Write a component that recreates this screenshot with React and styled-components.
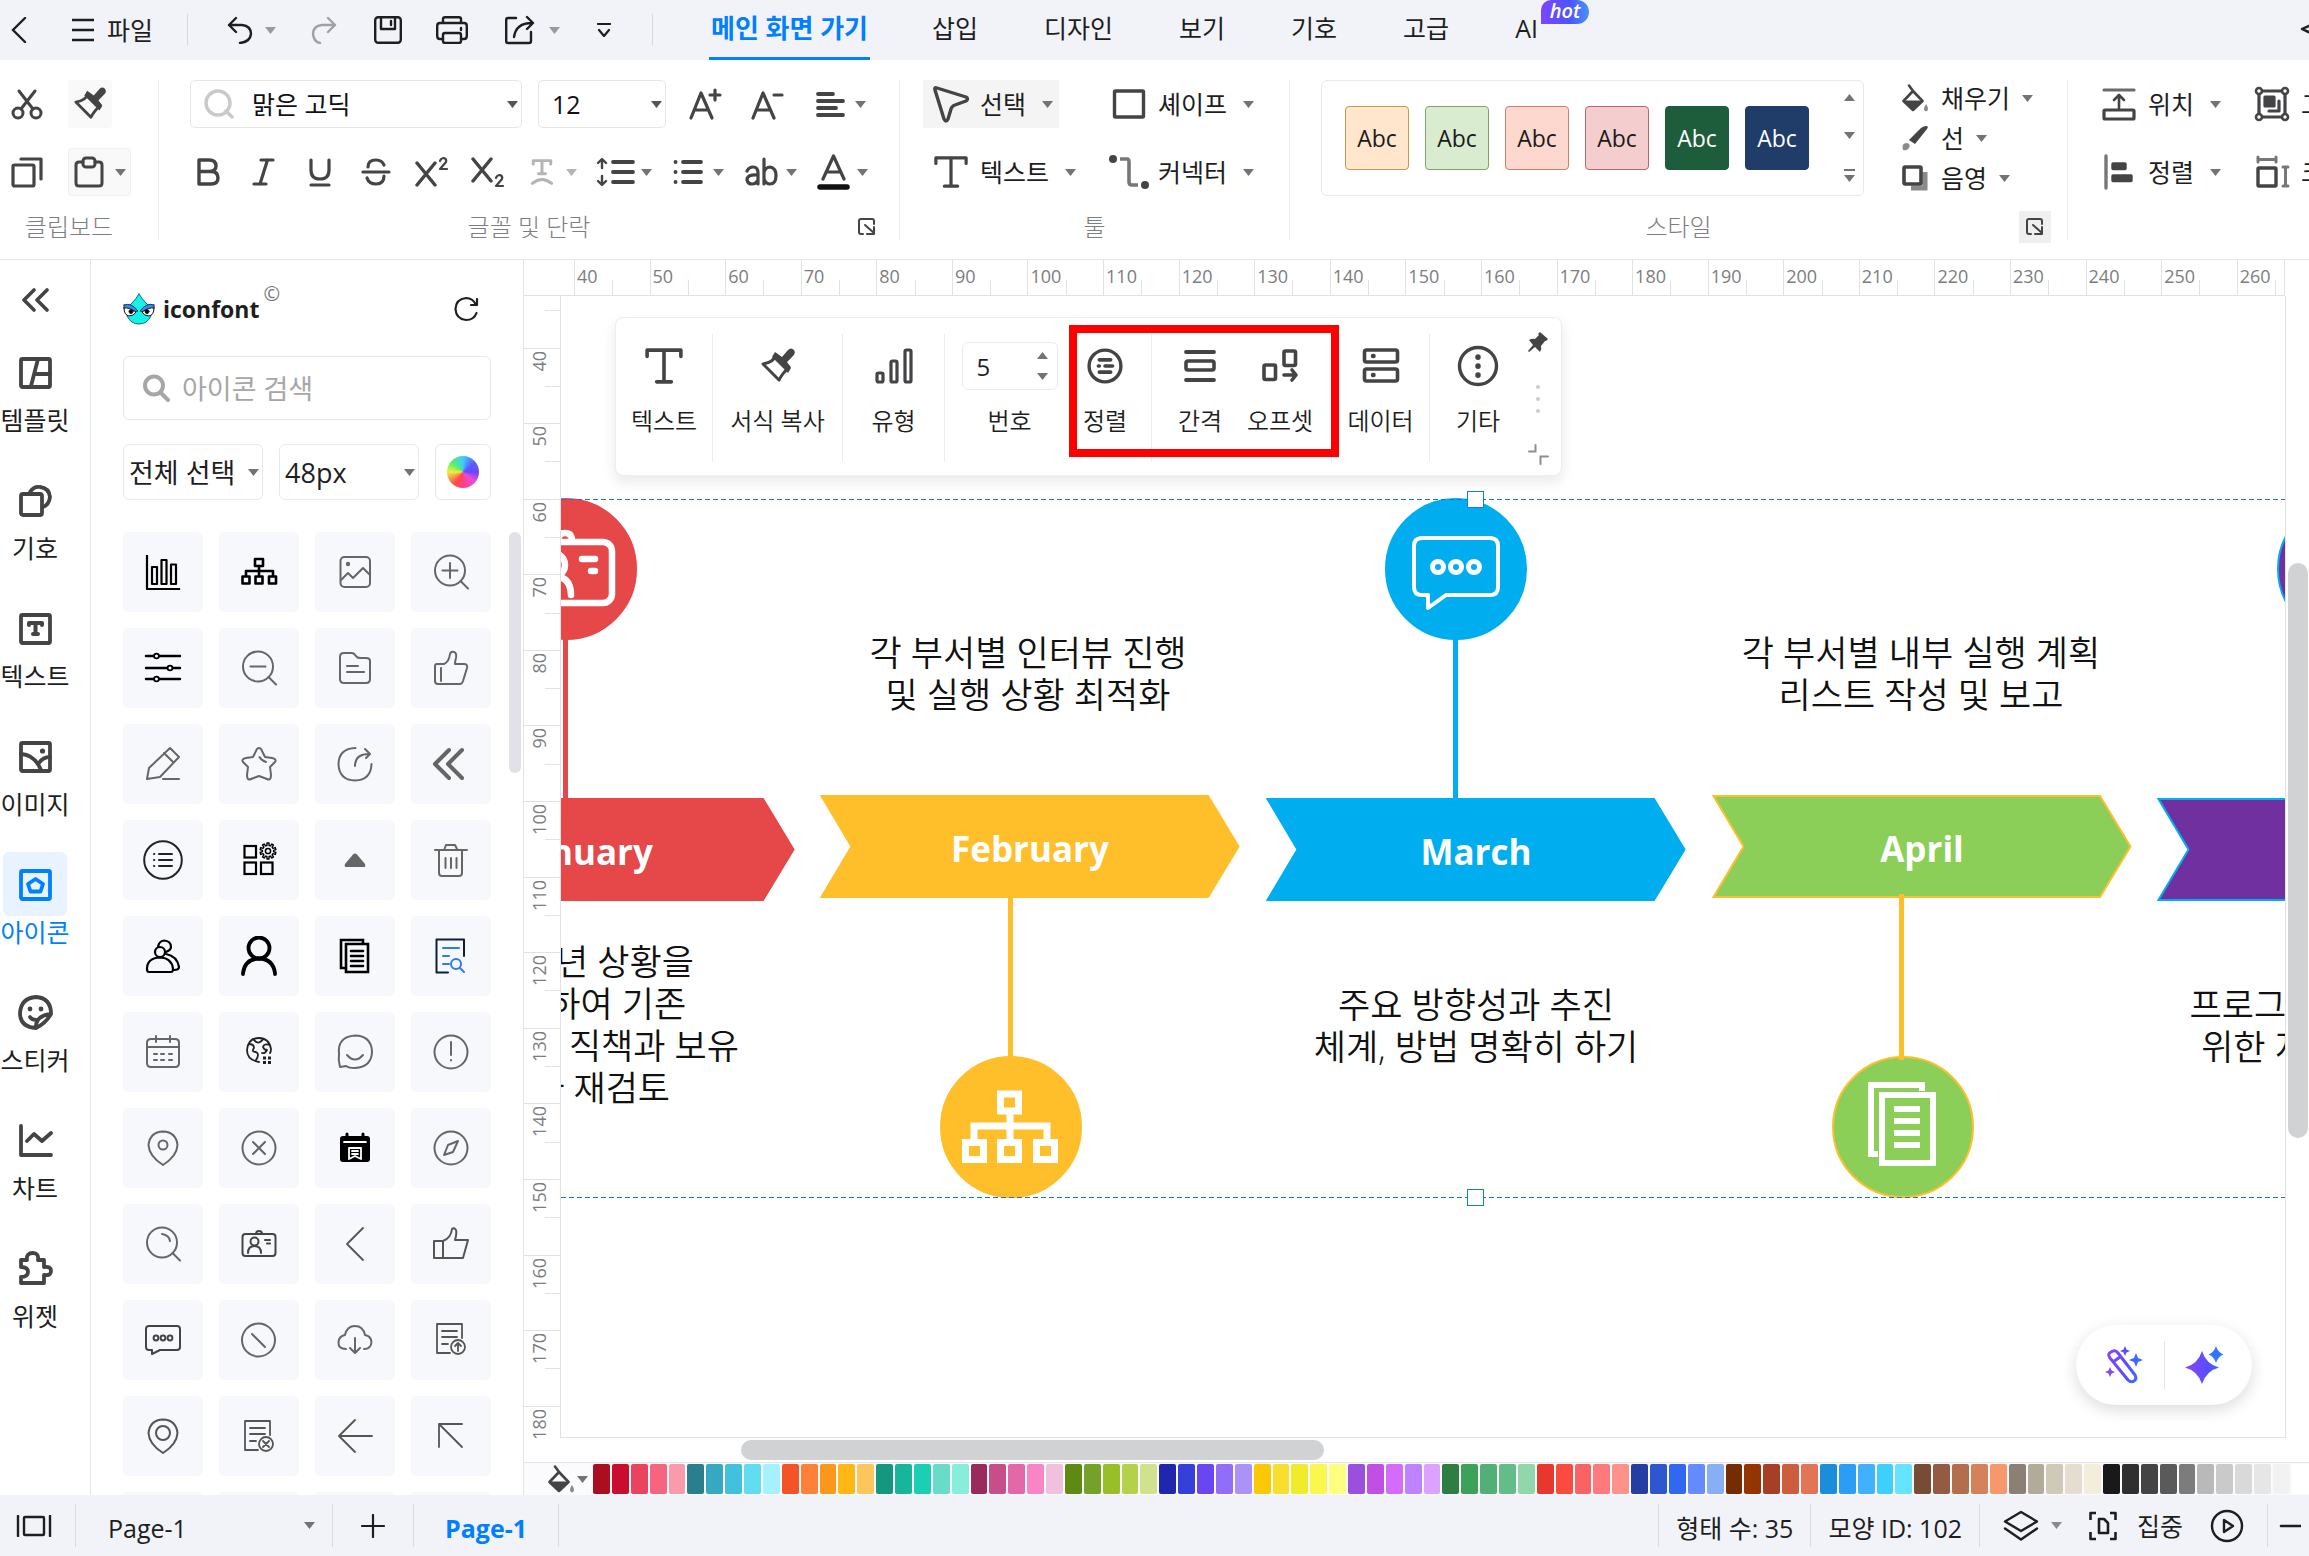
import React from "react";
import styled, { createGlobalStyle, css } from "styled-components";

const FONT = '"Open Sans", "Noto Sans CJK KR", sans-serif';
const INK = "#444446";
const BLUE = "#007fff";
/* Screen pixels between two labelled ruler marks. */
const STEP = "calc(907px / 12)";

const Global = createGlobalStyle`
  *, *::before, *::after { box-sizing: border-box; }
  html, body, #root { height: 100%; margin: 0; }
  body { font-family: ${FONT}; font-size: 25px; color: #1e1e1e; background: #fff; overflow: hidden; }
  button, input, select { font: inherit; color: inherit; margin: 0; padding: 0; border: 0; background: none; }
  button { cursor: pointer; }
  svg { display: block; flex: none; }
`;

/* ---------- drawing helpers ---------- */

const Ico = ({ w = 32, h, vb = "0 0 32 32", sw = 3, c = "currentColor", children }) => (
  <svg width={w} height={h || w} viewBox={vb} fill="none" stroke={c} strokeWidth={sw}
    strokeLinecap="round" strokeLinejoin="round" aria-hidden="true">{children}</svg>
);
const Fill = ({ c = "currentColor", ...p }) => <path fill={c} stroke="none" {...p} />;

const CaretSvg = ({ up, c = "#737373" }) => (
  <svg width="11" height="7" viewBox="0 0 11 7" aria-hidden="true">
    <path d={up ? "M0 7L5.5 0L11 7Z" : "M0 0H11L5.5 7Z"} fill={c} />
  </svg>
);

/* Outline of a toothed wheel: outer radius r, root radius q, n teeth. */
const gear = (cx, cy, r, q, n) => {
  const pts = [];
  for (let i = 0; i < n; i++) {
    [[-0.3, q], [-0.2, r], [0.2, r], [0.3, q]].forEach(([o, rad]) => {
      const a = ((i + o) / n) * Math.PI * 2;
      pts.push((cx + Math.sin(a) * rad).toFixed(2) + " " + (cy - Math.cos(a) * rad).toFixed(2));
    });
  }
  return "M" + pts.join("L") + "Z";
};

const TIcon = ({ w = 36 }) => (
  <Ico w={w} vb="0 0 36 36" sw={3.4}><path d="M2 9V3H34V9M18 3V33M11 33H25" /></Ico>
);
const BrushIcon = ({ w = 36 }) => (
  <Ico w={w} vb="0 0 36 36" sw={3}>
    <path d="M3 16Q14 14 16 7L29 19Q22 26 19 32Z" />
    <Fill d="M15 4L22 9L28 2Q31 -1 34 2Q36 5 33 8L27 14L31 20L28 25L12 9Z" />
  </Ico>
);
const BucketIcon = () => (
  <Ico w={28} vb="0 0 28 28" sw={2.6}>
    <path d="M8 1.500L12 7L2.500 17L12 26L21.500 17L12 7" />
    <Fill d="M2 16.500H22L12 27Z" />
    <Fill c="#8a8a8a" d="M25 20Q29 26 25 27.500Q21 26 25 20Z" />
  </Ico>
);
const Launch = () => (
  <Ico w={18} vb="0 0 18 18" sw={2}><path d="M5 16H3Q1 16 1 14V3Q1 1 3 1H14Q16 1 16 3V6M7 7L16 15M16 9V16H9" /></Ico>
);

/* ---------- top bar ---------- */

const Page = styled.div`display: flex; flex-direction: column; height: 100vh; overflow: hidden;`;
const TopBar = styled.header`
  position: relative; display: flex; align-items: center; height: 60px; flex: none;
  background: #f2f3f9; overflow: hidden; color: #1e1e1e;
`;
const BackButton = styled.button`display: grid; place-items: center; width: 38px; height: 56px;`;
const FileButton = styled.button`display: flex; align-items: center; gap: 12px; margin: 0 34px 0 33px; height: 56px; line-height: 36px;`;
const BarRule = styled.span`width: 1px; height: 32px; background: #d8d9de;`;
const Quick = styled.div`display: flex; align-items: center; gap: 32px; margin: 0 36px 0 36px;`;
const QuickButton = styled.button`
  display: flex; align-items: center; gap: 9px; height: 40px;
  color: ${(p) => (p.$dim ? "#a0a0a4" : "#1e1e1e")};
`;
const QuickSlot = styled.span`display: grid; place-items: center; width: ${(p) => p.$w || 32}px;`;
const Tabs = styled.nav`display: flex; gap: 58px; margin-left: 56px; height: 60px;`;
const Tab = styled.a`
  position: relative; padding: 0 4px; line-height: 56px; text-decoration: none; white-space: nowrap; color: #1e1e1e;
  ${(p) => p.$on && css`padding: 0 2px; color: ${BLUE}; font-size: 26px; font-weight: 700; border-bottom: 3px solid ${BLUE};`}
`;
const Hot = styled.span`
  position: absolute; top: 0; left: 30px; width: 48px; height: 24px; border-radius: 10px 12px 12px 0;
  background: linear-gradient(90deg, #7d45ff, #4d54ff 60%, #4794fb);
  color: #fff; font-size: 20px; font-weight: 600; font-style: italic; line-height: 22px; text-align: center;
`;
const ShareButton = styled.button`margin: 0 -15px 0 auto;`;

function Top() {
  return (
    <TopBar>
      <BackButton aria-label="뒤로"><Ico w={26} vb="0 0 26 26" sw={2.4}><path d="M19 1L7 13L19 25" strokeLinejoin="miter" /></Ico></BackButton>
      <FileButton><Ico w={24} vb="0 0 24 24" sw={2.4}><path d="M1 2H23M1 12H23M1 22H23" strokeLinecap="butt" /></Ico>파일</FileButton>
      <BarRule />
      <Quick>
        <QuickButton aria-label="실행 취소"><QuickSlot><Ico w={28} vb="0 0 28 28" sw={2.4}><path d="M10 2L3 9L10 16M3 9H16Q25 10 25 18Q24 26 14 27" /></Ico></QuickSlot><CaretSvg c="#9a9a9e" /></QuickButton>
        <QuickButton $dim aria-label="다시 실행"><QuickSlot><Ico w={28} vb="0 0 28 28" sw={2.4}><path d="M18 2L25 9L18 16M25 9H12Q3 10 3 18Q4 26 10 27" /></Ico></QuickSlot></QuickButton>
        <QuickButton aria-label="저장"><QuickSlot><Ico w={28} vb="0 0 28 28" sw={2.4}><rect x="1.2" y="1.2" width="25.6" height="25.6" rx="3" /><path d="M7 2V13H21V2M17 5V9" /></Ico></QuickSlot></QuickButton>
        <QuickButton aria-label="인쇄"><QuickSlot><Ico w={32} h={28} vb="0 0 32 28" sw={2.4}><path d="M7 7V3Q7 1.2 9 1.2H23Q25 1.2 25 3V7M7 23H4Q1.2 23 1.2 20V10Q1.2 7 4 7H28Q30.8 7 30.8 10V20Q30.8 23 28 23H25M25 12V14" /><rect x="7" y="17" width="18" height="10" rx="2" /></Ico></QuickSlot></QuickButton>
        <QuickButton aria-label="내보내기"><QuickSlot $w={40}><Ico w={30} vb="0 0 30 30" sw={2.4}><path d="M11 3H3Q1.2 3 1.2 5V26Q1.2 28 3 28H24Q26 28 26 26V17M22 2L28 8L22 14M27 8Q11 8 9 22" /></Ico></QuickSlot><CaretSvg c="#9a9a9e" /></QuickButton>
        <QuickButton aria-label="더 보기"><QuickSlot $w={24}><Ico w={14} vb="0 0 14 14" sw={2.2}><path d="M1 1H13M2 7L7 13L12 7" /></Ico></QuickSlot></QuickButton>
      </Quick>
      <BarRule />
      <Tabs>
        <Tab href="#home" $on>메인 화면 가기</Tab>
        {["삽입", "디자인", "보기", "기호", "고급"].map((t) => <Tab key={t} href={"#" + t}>{t}</Tab>)}
        <Tab href="#ai">AI<Hot>hot</Hot></Tab>
      </Tabs>
      <ShareButton aria-label="공유"><Ico w={24} vb="0 0 24 24" sw={2.4}><path d="M20 3L2 11L20 19M2 11L8 14" /></Ico></ShareButton>
    </TopBar>
  );
}

/* ---------- ribbon ---------- */

const RibbonBar = styled.section`
  display: flex; height: 200px; flex: none; padding-top: 20px; overflow: hidden;
  border-bottom: 1px solid #e6e6e6; background: #fff; color: ${INK};
`;
const Rule = styled.span`width: 1px; height: 160px; flex: none; background: #ececec;`;
const Group = styled.div`display: flex; flex-direction: column; gap: 15px; flex: none; min-width: ${(p) => p.$min || 0}px;`;
const Rows = styled.div`display: flex; flex-direction: column; gap: 20px; padding: ${(p) => p.$pad};`;
const Row = styled.div`display: flex; align-items: center; height: 48px; gap: ${(p) => p.$gap}px;`;
const LabelRow = styled.div`
  display: grid; grid-template-columns: 1fr auto 1fr; align-items: center; height: 32px; padding: 0 ${(p) => p.$pr || 16}px 0 16px;
  color: #7d7d82; font-size: 24px; font-weight: 300; line-height: 32px; white-space: nowrap;
  & > :first-child { grid-column: 2; }
`;
const LaunchButton = styled.button`
  justify-self: end; display: grid; place-items: center; width: 32px; height: 32px; color: ${INK};
  background: ${(p) => (p.$on ? "#efefef" : "transparent")};
`;
const ToolButton = styled.button`
  display: flex; align-items: center; justify-content: ${(p) => (p.$end ? "flex-end" : "center")};
  gap: ${(p) => p.$gap || 10}px; width: ${(p) => p.$w || 48}px; height: 48px; border-radius: 4px; flex: none;
  background: ${(p) => (p.$soft ? "#f9f9f9" : "transparent")};
  border: ${(p) => (p.$line ? "1px solid #f0f0f0" : "0")};
`;
const Field = styled.label`
  display: flex; align-items: center; position: relative; width: ${(p) => p.$w}px; height: 48px; padding: 0 3px 0 13px;
  border: 1px solid #e6e6e6; border-radius: 5px; color: #111;
`;
const PlainSelect = styled.select`
  appearance: none; flex: 1; min-width: 0; height: 46px; outline: 0;
  padding: ${(p) => p.$pt || 0}px 0 0 ${(p) => p.$pl || 0}px;
`;
const TextButton = styled.button`
  display: flex; align-items: center; justify-self: start; height: ${(p) => p.$h || 48}px; padding: 0 6px; color: #1e1e1e;
  line-height: 36px; white-space: nowrap; background: ${(p) => (p.$on ? "#f4f4f4" : "transparent")};
`;
const Slot = styled.span`
  display: grid; place-items: center; width: ${(p) => p.$w || 44}px; margin-right: ${(p) => p.$mr || 7}px; color: ${INK};
`;
const Text = styled.span`margin-right: ${(p) => p.$mr || 16}px;`;
const TwoCols = styled.div`
  display: grid; grid-template-columns: ${(p) => p.$first}px auto; row-gap: 20px; padding: ${(p) => p.$pad};
`;
const StyleArea = styled.div`display: flex; gap: 31px; padding: 0 28px 0 31px;`;
const Gallery = styled.div`
  display: flex; align-items: center; gap: 16px; width: 543px; height: 116px; padding: 0 8px 0 23px;
  border: 1px solid #e9e9e9; border-radius: 6px;
`;
const Sample = styled.button`
  width: 64px; height: 64px; border-radius: 4px; background: ${(p) => p.$bg}; border: 1px solid ${(p) => p.$edge};
  color: ${(p) => p.$fg || "#1a1a1a"}; font-size: 23px; line-height: 36px;
`;
const GalleryNav = styled.div`
  display: flex; flex-direction: column; align-items: center; justify-content: space-between; height: 88px; margin-left: auto; width: 12px;
`;
const Mini = styled.div`display: flex; flex-direction: column; align-items: flex-start; gap: 4px;`;
const Bare = styled.button`display: grid; place-items: center;`;

const LabelTool = ({ icon, text, on }) => (
  <TextButton $on={on}><Slot>{icon}</Slot><Text>{text}</Text><CaretSvg /></TextButton>
);
const MiniTool = ({ icon, text }) => (
  <TextButton $h={36}><Slot $w={28} $mr={12}>{icon}</Slot><Text $mr={12}>{text}</Text><CaretSvg /></TextButton>
);

const SAMPLES = [
  { $bg: "#ffe6cc", $edge: "#c39a4c" }, { $bg: "#d9ecd0", $edge: "#7ca569" }, { $bg: "#fdd8cf", $edge: "#c97f6c" },
  { $bg: "#f4cdce", $edge: "#b8686b" }, { $bg: "#1e5d3b", $edge: "#1e5d3b", $fg: "#fff" }, { $bg: "#203c68", $edge: "#203c68", $fg: "#fff" },
];

function Ribbon() {
  return (
    <RibbonBar>
      <Group>
        <Rows $pad="0 27px 0 3px">
          <Row $gap={17}>
            <ToolButton aria-label="잘라내기"><Ico w={32} sw={3}><path d="M8 3L22 21M24 3L10 21" /><circle cx="7" cy="25" r="5" /><circle cx="25" cy="25" r="5" /></Ico></ToolButton>
            <ToolButton $soft $w={44} aria-label="서식 복사"><BrushIcon w={34} /></ToolButton>
          </Row>
          <Row $gap={17}>
            <ToolButton aria-label="복사"><Ico w={32} sw={3.2}><rect x="2" y="9" width="21" height="21" rx="1.5" /><path d="M10 3H30V23" /></Ico></ToolButton>
            <ToolButton $soft $line $w={63} aria-label="붙여넣기"><Ico w={32} sw={3}><path d="M10 6H6Q3 6 3 9V27Q3 30 6 30H26Q29 30 29 27V9Q29 6 26 6H22" /><rect x="10" y="2" width="12" height="9" rx="3" /></Ico><CaretSvg /></ToolButton>
          </Row>
        </Rows>
        <LabelRow $pr={36}><span>클립보드</span></LabelRow>
      </Group>
      <Rule />
      <Group>
        <Rows $pad="0 31px">
          <Row $gap={16}>
            <Field $w={332}>
              <Ico w={30} vb="0 0 30 30" sw={3.4} c="#c9c9c9"><circle cx="14" cy="14" r="12" /><path d="M22 22L28 28" /></Ico>
              <PlainSelect aria-label="글꼴" $pl={18}><option>맑은 고딕</option></PlainSelect><CaretSvg c="#555" />
            </Field>
            <Field $w={128}><PlainSelect aria-label="글꼴 크기"><option>12</option></PlainSelect><CaretSvg c="#555" /></Field>
            <ToolButton $w={46} aria-label="글꼴 크게"><Ico w={34} vb="0 0 34 34" sw={3.2}><path d="M3 31L13 6L24 31M7 23H20M27 3V13M22 8H32" /></Ico></ToolButton>
            <ToolButton $w={46} aria-label="글꼴 작게"><Ico w={34} vb="0 0 34 34" sw={3.2}><path d="M3 31L13 6L24 31M7 23H20M24 8H32" /></Ico></ToolButton>
            <ToolButton $w={60} $end aria-label="맞춤"><Ico w={29} vb="0 0 29 29" sw={3.8}><path d="M2 4H17M2 11H27M2 18H20M2 25H27" /></Ico><CaretSvg /></ToolButton>
          </Row>
          <Row $gap={20}>
            <ToolButton $w={36} aria-label="굵게"><Ico w={32} sw={3.4}><path d="M7 4H17Q24 4 24 10Q24 15.500 17 15.500H7ZM7 15.500H19Q26 15.500 26 22Q26 28 19 28H7Z" /></Ico></ToolButton>
            <ToolButton $w={36} aria-label="기울임꼴"><Ico w={32} sw={3.2}><path d="M13 4H25M6 28H18M19.500 4L12 28" /></Ico></ToolButton>
            <ToolButton $w={36} aria-label="밑줄"><Ico w={32} sw={3.2}><path d="M7 4V14Q7 23 16 23Q25 23 25 14V4M7 29H25" /></Ico></ToolButton>
            <ToolButton $w={36} aria-label="취소선"><Ico w={32} sw={3.2}><path d="M24 9Q22 4 16 4Q8 4 8 11M3 16H29M7 22Q9 28 16 28Q24 28 24 20" /></Ico></ToolButton>
            <ToolButton $w={36} aria-label="위 첨자"><Ico w={34} vb="0 0 34 34" sw={3.4}><path d="M2 8L20 30M20 8L2 30" /><path d="M25 6Q26 3 29 3Q32 4 31 7L25 14H32" strokeWidth="2.200" /></Ico></ToolButton>
            <ToolButton $w={36} aria-label="아래 첨자"><Ico w={34} vb="0 0 34 34" sw={3.4}><path d="M2 4L20 26M20 4L2 26" /><path d="M25 23Q26 20 29 20Q32 21 31 24L25 31H32" strokeWidth="2.200" /></Ico></ToolButton>
            <ToolButton $w={51} $end aria-label="텍스트 효과"><Ico w={28} vb="0 0 28 32" sw={3.4} c="#b4b4b6"><path d="M4 7V3H24V7M14 3V18M10 18H18M3 29Q14 20 25 29" /></Ico><CaretSvg c="#b4b4b6" /></ToolButton>
            <ToolButton $w={55} $gap={6} $end aria-label="줄 간격"><Ico w={38} h={30} vb="0 0 38 30" sw={3.8}><path d="M16 5H36M16 15H36M16 25H36" /><path d="M5 3V11M5 19V27M1 6L5 2L9 6M1 24L5 28L9 24" strokeWidth="2.400" /></Ico><CaretSvg /></ToolButton>
            <ToolButton $w={52} $end aria-label="목록"><Ico w={30} vb="0 0 30 30" sw={3.8}><path d="M10 5H28M10 15H28M10 25H28M2.500 5H2.600M2.500 15H2.600M2.500 25H2.600" /></Ico><CaretSvg /></ToolButton>
            <ToolButton $w={53} $gap={7} $end aria-label="대소문자"><Ico w={35} h={30} vb="0 0 35 30" sw={3.2}><path d="M3 14Q5 10 9 10Q14 10 14 16V27M14 18Q3 17 3 23Q4 27 8 27Q12 27 14 23M20 2V27M20 15Q22 10 26 10Q32 11 32 18.500Q32 27 26 27Q22 27 20 22" /></Ico><CaretSvg /></ToolButton>
            <ToolButton $w={51} $gap={7} $end aria-label="글꼴 색"><Ico w={33} h={36} vb="0 0 33 36" sw={3.2}><path d="M6 25L16.500 2L27 25M9 18H24" /><path d="M3 33H30" stroke="#111" strokeWidth="5.500" /></Ico><CaretSvg /></ToolButton>
          </Row>
        </Rows>
        <LabelRow><span>글꼴 및 단락</span><LaunchButton aria-label="글꼴 설정"><Launch /></LaunchButton></LabelRow>
      </Group>
      <Rule />
      <Group>
        <TwoCols $first={178} $pad="0 29px 0 23px">
          <LabelTool on text="선택" icon={<Ico w={38} vb="0 0 38 38" sw={3.400}><path d="M3 5Q2 2 5 3L34 12Q37 14 34 16L23 20Q20 21 19 24L16 34Q14 38 12 34Z" /></Ico>} />
          <LabelTool text="셰이프" icon={<Ico w={34} vb="0 0 34 34" sw={3.400}><rect x="2.500" y="4" width="29" height="26" rx="1" /></Ico>} />
          <LabelTool text="텍스트" icon={<TIcon w={34} />} />
          <LabelTool text="커넥터" icon={<Ico w={42} h={36} vb="0 0 42 36" sw={3.600} c="#77777a"><path d="M12 5H19Q21 5 21 8V28Q21 31 24 31H30" strokeLinecap="butt" /><circle cx="5" cy="5" r="4" fill={INK} stroke="none" /><circle cx="37" cy="31" r="4" fill={INK} stroke="none" /></Ico>} />
        </TwoCols>
        <LabelRow><span>툴</span></LabelRow>
      </Group>
      <Rule />
      <Group>
        <StyleArea>
          <Gallery>
            {SAMPLES.map((s) => <Sample key={s.$bg} {...s}>Abc</Sample>)}
            <GalleryNav>
              <Bare aria-label="이전"><CaretSvg up /></Bare>
              <Bare aria-label="다음"><CaretSvg /></Bare>
              <Bare aria-label="모두 보기"><svg width="11" height="13" viewBox="0 0 11 13"><path d="M0 0H11V2H0ZM0 6H11L5.5 13Z" fill="#737373" /></svg></Bare>
            </GalleryNav>
          </Gallery>
          <Mini>
            <MiniTool text="채우기" icon={<BucketIcon />} />
            <MiniTool text="선" icon={<Ico w={28} vb="0 0 28 28"><Fill d="M25 2Q28 2 26 5L14 20L8 16L20 4Q23 2 25 2Z" /><Fill c="#8a8a8a" d="M2 26Q0 19 6 19Q10 20 8 24Q6 27 2 26Z" /></Ico>} />
            <MiniTool text="음영" icon={<Ico w={28} vb="0 0 28 28" sw={3.600}><path d="M10 24H24V8" stroke="#8a8a8a" strokeLinecap="butt" strokeLinejoin="miter" strokeWidth="5" /><rect x="3" y="3" width="17" height="17" rx="1" fill="#fff" /></Ico>} />
          </Mini>
        </StyleArea>
        <LabelRow><span>스타일</span><LaunchButton $on aria-label="스타일 설정"><Launch /></LaunchButton></LabelRow>
      </Group>
      <Rule />
      <Group $min={524}>
        <TwoCols $first={153} $pad="0 0 0 23px">
          <LabelTool text="위치" icon={<Ico w={36} vb="0 0 36 36" sw={3.200}><path d="M3 4H33" stroke="#6a6a6c" /><path d="M18 22V10M13 14L18 9L23 14" strokeWidth="2.600" /><rect x="3" y="24" width="30" height="9" rx="1" /></Ico>} />
          <LabelTool text="그룹" icon={<Ico w={36} vb="0 0 36 36" sw={3.200}><rect x="5" y="5" width="26" height="26" /><g fill="#fff" strokeWidth="2.600"><circle cx="5" cy="5" r="3" /><circle cx="31" cy="5" r="3" /><circle cx="5" cy="31" r="3" /><circle cx="31" cy="31" r="3" /></g><rect x="11" y="11" width="9" height="9" fill={INK} /><path d="M25 15V25H15" /></Ico>} />
          <LabelTool text="정렬" icon={<Ico w={36} vb="0 0 36 36" sw={3.400}><path d="M5 2V34" stroke="#77777a" /><rect x="12" y="10" width="12" height="4.500" fill={INK} /><rect x="12" y="22" width="18" height="4.500" fill={INK} /></Ico>} />
          <LabelTool text="크기" icon={<Ico w={36} vb="0 0 36 36" sw={3.400}><path d="M4 3V8M22 3V8M4 5.500H22M29 13H34M29 32H34M31.500 13V32" stroke="#77777a" strokeWidth="3" /><rect x="4" y="14" width="18" height="18" rx="1" /></Ico>} />
        </TwoCols>
        <LabelRow><span>정렬</span></LabelRow>
      </Group>
    </RibbonBar>
  );
}

/* ---------- left navigation ---------- */

const Main = styled.main`display: flex; flex: 1; min-height: 0;`;
const Rail = styled.nav`
  display: flex; flex-direction: column; width: 91px; flex: none; padding: 16px 20px 0 0; color: ${INK};
  border-right: 1px solid #e4e4e6; overflow: hidden;
`;
const Fold = styled.button`display: grid; place-items: center; height: 48px; margin-bottom: 16px;`;
const RailItem = styled.a`
  display: flex; flex-direction: column; align-items: center; height: 96px; margin-bottom: 32px;
  text-decoration: none; white-space: nowrap; line-height: 32px; color: ${(p) => (p.$on ? BLUE : "#1e1e1e")};
`;
const RailIcon = styled.span`
  display: grid; place-items: center; width: 64px; height: 64px; flex: none; border-radius: 6px;
  color: ${(p) => (p.$on ? BLUE : INK)}; background: ${(p) => (p.$on ? "#e8f3ff" : "transparent")};
`;

const RAIL = [
  ["템플릿", <><rect x="3" y="4" width="29" height="28" rx="1.5" /><path d="M20 4L13 31M17 19H32" /></>],
  ["기호", <><path d="M12 9Q16 3 22 4Q31 5 32 14Q31 22 25 24" /><rect x="3" y="11" width="21" height="21" rx="2" /></>],
  ["텍스트", <><rect x="3" y="4" width="29" height="28" rx="1.5" /><path d="M11 14V12H24V14M17.5 12V23M15 23H20" strokeWidth="4" /></>],
  ["이미지", <><rect x="3" y="4" width="29" height="28" rx="1.5" /><path d="M3 15Q17 16 23 31M21 24Q25 18 32 18" /><circle cx="24.500" cy="12" r="2.600" fill="currentColor" stroke="none" /></>],
  ["아이콘", <><rect x="3" y="4" width="29" height="28" rx="1.5" /><path d="M17.500 12L25 17L22.500 24.500H12.500L10 17Z" /></>],
  ["스티커", <><path d="M18 33Q2 32 2 18Q3 3 18 2Q33 3 33 19Q28 28 18 33ZM18 33Q17 21 33 19M12 22Q14 25 18 25" /><circle cx="12" cy="14" r="2.400" fill="currentColor" stroke="none" /><circle cx="23" cy="14" r="2.400" fill="currentColor" stroke="none" /></>],
  ["차트", <path d="M3 3V32H33M9 18L16 11L24 18L33 10" />],
  ["위젯", <path d="M3 9H9Q8 2 15 2Q21 2 20 9H26V16Q33 15 33 20Q33 25 26 24V32H3V26Q10 26 10 21Q10 16 3 16Z" />],
];

function LeftRail() {
  return (
    <Rail>
      <Fold aria-label="접기"><Ico w={28} vb="0 0 28 28" sw={3.6}><path d="M13 4L3 14L13 24M26 4L16 14L26 24" /></Ico></Fold>
      {RAIL.map(([name, art]) => {
        const on = name === "아이콘";
        return (
          <RailItem key={name} href={"#" + name} $on={on}>
            <RailIcon $on={on}><Ico w={35} vb="0 0 35 35" sw={3.8}>{art}</Ico></RailIcon>{name}
          </RailItem>
        );
      })}
    </Rail>
  );
}

/* ---------- icon library panel ---------- */

const Panel = styled.aside`
  display: flex; flex-direction: column; width: 432px; flex: none; padding: 24px 0 0 32px; overflow: hidden;
`;
const Brand = styled.div`display: flex; align-items: center; height: 48px; width: 368px; padding-top: 2px;`;
const BrandName = styled.strong`margin-left: 8px; font-size: 23px; line-height: 32px; font-weight: 700;`;
const Mark = styled.sup`align-self: flex-start; margin-left: 4px; font-size: 20px; line-height: 16px; color: #77777a;`;
const Reload = styled.button`margin: 0 12px 0 auto;`;
const SearchBox = styled.label`
  display: flex; align-items: center; gap: 12px; width: 368px; height: 64px; margin-top: 24px; padding: 0 18px;
  border: 1px solid #e6e6e8; border-radius: 6px;
`;
const SearchInput = styled.input`flex: 1; min-width: 0; height: 40px; outline: 0; font-size: 27px; &::placeholder { color: #a6a6a8; opacity: 1; }`;
const Filters = styled.div`display: grid; grid-template-columns: 140px 140px 56px; gap: 16px; margin-top: 24px; height: 56px;`;
const Pick = styled.label`
  display: flex; align-items: center; padding: 0 3px 0 5px; border: 1px solid #e9e9eb; border-radius: 6px; font-size: 27px;
`;
const Wheel = styled.button`
  display: grid; place-items: center; border: 1px solid #e6e6e8; border-radius: 6px;
  &::before { content: ""; width: 32px; height: 32px; border-radius: 50%;
    background: conic-gradient(#41c9ff, #5b5cff 50deg, #6b45ff 90deg, #ee4bd8 130deg, #ff3f7f 180deg, #ff4a4a 215deg, #f7a04a 245deg, #f3ee3c 270deg, #55f26a 310deg, #41c9ff); }
`;
const Shelf = styled.div`display: flex; flex: 1; min-height: 0; margin-top: 32px; overflow: hidden;`;
const Tiles = styled.div`display: grid; grid-template-columns: repeat(4, 80px); grid-auto-rows: 80px; gap: 16px; align-content: start;`;
const Tile = styled.button`
  display: grid; place-items: center; border-radius: 5px; background: #f7f8fc; color: ${(p) => p.$c || "#666"};
`;
const Thumb = styled.span`width: 12px; height: 241px; margin-left: 18px; border-radius: 6px; background: #e1e1e7;`;

const K = "#000";
const TILES = [
  [K, 2.2, <><path d="M4 4V37H36" strokeLinecap="square" /><rect x="9" y="15" width="5" height="17" /><rect x="18.500" y="8" width="5" height="24" /><rect x="28" y="12.500" width="5" height="19.500" /></>],
  [K, 2.6, <><rect x="16" y="7" width="8" height="7" /><path d="M20 14V24M7 24V19H34V24" /><rect x="3.500" y="24.500" width="7" height="7" /><rect x="16.500" y="24.500" width="7" height="7" /><rect x="30" y="24.500" width="7" height="7" /></>],
  [, 2, <><rect x="5.500" y="5" width="29.500" height="30" rx="4" /><path d="M6 28L13 21L18 26L28 16L35 23" /><circle cx="13" cy="12" r="2.200" fill="#666" stroke="none" /></>],
  [, 2, <><circle cx="19" cy="18.500" r="15" /><path d="M11.500 18.500H26.500M19 11V26M29.500 29L37 36.500" /></>],
  [K, 2.4, <><path d="M3 8H37M3 20H37M3 31H37" /><g fill="#fff" strokeWidth="1.800"><circle cx="13.500" cy="8" r="2.400" /><circle cx="27" cy="20" r="2.400" /><circle cx="13.500" cy="31" r="2.400" /></g></>],
  [, 2, <><circle cx="19" cy="18.500" r="15" /><path d="M11.500 18.500H26.500M29.500 29L37 36.500" /></>],
  [, 2, <path d="M5 31V9Q5 5 9 5H17Q19 5 21 8Q22 10 25 10H31Q35 10 35 13V31Q35 35 31 35H9Q5 35 5 31ZM12 18H23M12 24H29" />],
  [, 2, <path d="M4 18Q4 16 6 16H13Q18 14 19 6Q20 3 23 4Q26 5 25 10Q24 13 24 16H33Q37 16 36 20L32 33Q31 36 29 36H7Q4 36 4 33ZM10 20V33" />],
  [, 2, <path d="M4 35L6 24L27 4L36 13L17 33ZM21 9L30 18M20 35H36" />],
  [, 2, <path d="M20 4Q22 4 23 7L26 13L33 14Q38 15 36 18L31 23L32 31Q32 37 28 35L20 32L12 35Q8 37 8 31L9 23L4 18Q2 15 7 14L14 13L17 7Q18 4 20 4ZM20.500 13Q23 17 27 18" />],
  [, 2, <path d="M20.500 4Q4 4.500 3.500 20Q4 36 20 36.500Q36 36 36.500 20M20 22Q20 10 34 10M30 5L35 10L31 14" />],
  [, 4, <path d="M18 6L4 20L18 34M31 6L17 20L31 34" />],
  ["#222", 2, <><circle cx="20" cy="20" r="18.800" /><path d="M16 14H29M16 20H29M16 26H29M11 14H11.300M11 20H11.300M11 26H11.300" /></>],
  [K, 2.2, <><g strokeLinejoin="miter"><rect x="5.500" y="6" width="11.500" height="11.500" /><rect x="5.500" y="22.500" width="11.500" height="11.500" /><rect x="22" y="22.500" width="11.500" height="11.500" /></g><path d={gear(29, 11, 8, 5.6, 10)} strokeWidth="1.400" /><circle cx="29" cy="11" r="2.600" strokeWidth="1.500" /></>],
  [, 2, <Fill d="M10 24L18 14.500Q20 12.500 22 14.500L30 24Q31 27 29 27H11Q9 27 10 24Z" />],
  [, 2, <path d="M4 10H36M13.500 9L15 5H24L26 9M8 10V33Q8 36 11 36H28Q31 36 31 33V10M14.500 18V28M20 18V28M25.500 18V28" />],
  [K, 2.2, <><circle cx="17" cy="16" r="5" /><path d="M15 11Q16 5 21 4.500Q28 5 28 11Q28 14 23 16M23 18Q34 20 36 31Q36 34 31 34M4 33Q4 22 17 21.500Q29 22 30 33Q30 36 28 36H6Q4 36 4 33Z" /></>],
  [K, 3.8, <><circle cx="20" cy="12" r="10.500" /><path d="M4 38V37Q6 23 20 22.500Q34 23 36 37V38" /></>],
  [K, 2.6, <path d="M9 32H6V4H28V7M11 8H33V36H11ZM16 15H28M16 20H28M16 25H28M16 30H28" strokeLinejoin="miter" />],
  ["#2b7af0", 2, <><path d="M17 36.500H5.500V3.500H33V20" stroke="#0d1f38" /><path d="M12 12H28M12 20H18M12 28H18" /><circle cx="25" cy="28" r="5" /><path d="M29 32L33 36" /></>],
  [, 2, <path d="M8 7H32Q36 7 36 11V31Q36 35 32 35H8Q4 35 4 31V11Q4 7 8 7ZM4 15H36M13 4V10M27 4V10M11 22H14M18 22H21M26 22H29M11 28H14M18 28H21M26 28H29" />],
  ["#222", 1.8, <><path d="M20 30Q8 28 8 18Q9 6 20 6Q30 6 32 17Q32 20 31 21M10 12Q15 12 15 16Q12 20 17 20Q21 22 17 28M14 7Q18 12 21 10Q24 8 24 7M31 13Q25 11 24 15Q25 18 28 18Q26 22 23 21" /><path d="M24 26H32M24 30.500H32" strokeDasharray="3 2" strokeLinecap="butt" strokeWidth="3" /></>],
  [, 2, <path d="M5 35Q3 28 4 22Q2 5 20 3.500Q36 4 37 19Q37 35 20 36Q14 36 11 34ZM12 23Q20 32 28 23" />],
  [, 2, <><circle cx="20" cy="20" r="16.500" /><path d="M20 10V23M20 28V28.500" /></>],
  [, 2, <><path d="M20 37Q6 28 5.500 17Q7 4 20 3.500Q33 4 34.500 17Q34 28 20 37Z" /><circle cx="20" cy="17" r="4.500" /></>],
  [, 2, <><circle cx="20" cy="20" r="16.500" /><path d="M14 14L26 26M26 14L14 26" /></>],
  [K, 2, <><rect x="6" y="9" width="28" height="24" rx="2" fill={K} /><path d="M12 6V12M28 6V12" strokeWidth="3" /><path d="M9 14H31M14 31V20H26V31L20 28ZM17 23H23M17 26H23" stroke="#fff" strokeWidth="1.800" /></>],
  [, 2, <><circle cx="20" cy="20" r="16.500" /><path d="M27 13L22 24L13 27L17 17Z" /></>],
  [, 2, <><circle cx="19" cy="18.500" r="15" /><path d="M29.500 29L37 36.500M19 10Q26 11 27 17" /></>],
  ["#444", 2, <><rect x="3.500" y="10" width="33" height="22" rx="3" /><path d="M17 10Q17 7 20 7Q23 7 23 10M9 29Q9 22 15.500 22Q22 22 22 29M26 16H31M28 19.500H31" /><circle cx="15.500" cy="17.500" r="4" /></>],
  ["#555", 1.8, <path d="M28 4L12 20L28 36" />],
  ["#555", 2, <path d="M3 17H12V34H3ZM12 17Q20 14 21 5Q23 3 25 6Q26 9 24 16H37L32 34H12" />],
  ["#444", 2, <><path d="M6 6H34Q37 6 37 9V27Q37 30 34 30H17L9 34V30H6Q3 30 3 27V9Q3 6 6 6Z" /><circle cx="13" cy="18" r="2.400" /><circle cx="20" cy="18" r="2.400" /><circle cx="27" cy="18" r="2.400" /></>],
  [, 2, <><circle cx="19.500" cy="20" r="16.500" /><path d="M13 14L26 27" /></>],
  [, 2, <path d="M11 29Q3 29 3.500 22Q4 16 10 15Q12 6 20 6Q28 6 30 15Q36 16 36.500 22Q36 29 29 29M20 18V32M15 28L20 33L25 28" />],
  ["#555", 1.8, <><path d="M19 33H6V4H31V18M11 11H26M11 17H26M11 24H17" /><circle cx="27" cy="27" r="7" /><path d="M27 31V24M24 26L27 23L30 26" /></>],
  ["#555", 2, <><path d="M20 37Q6 28 5.500 17Q7 4 20 3.500Q33 4 34.500 17Q34 28 20 37Z" /><circle cx="20" cy="17" r="7" /></>],
  ["#555", 1.8, <><path d="M19 34H6V5H31V19M11 12H26M11 18H26M11 25H17" /><circle cx="27" cy="28" r="7" /><path d="M24 25L30 31M30 25L24 31" /></>],
  ["#555", 1.8, <path d="M20 4L4 20L20 36M4 20H37" />],
  ["#555", 1.8, <path d="M8 31V8H31M8 8L31 31" />],
  [, 2, null], [, 2, null], [, 2, null], [, 2, null],
];

function IconPanel() {
  return (
    <Panel>
      <Brand>
        <Ico w={32} h={32} vb="0 0 32 32" sw={1}>
          <path d="M16 1Q19 6 23 10Q29 15 28 23Q24 31 16 31Q8 31 4 23Q3 15 9 10Q13 6 16 1Z" fill="#14f3e6" stroke="#0b6f7c" />
          <path d="M1 12Q8 9 15 18L6 20Q0 18 1 12ZM31 12Q24 9 17 18L26 20Q32 18 31 12Z" fill="#2f8df0" stroke="#123a5a" />
          <path d="M1 15Q6 14 13 19Q11 23 6 23Q1 22 1 15ZM31 15Q26 14 19 19Q21 23 26 23Q31 22 31 15Z" fill="#fff" stroke="#111" />
          <circle cx="8" cy="18.500" r="2" fill="#000" /><circle cx="24" cy="18.500" r="2" fill="#000" />
        </Ico>
        <BrandName>iconfont</BrandName><Mark>©</Mark>
        <Reload aria-label="새로 고침"><Ico w={26} vb="0 0 26 26" sw={2.2}><path d="M23 9Q20 2 13 2Q3 3 2.500 13Q3 23 13 24Q21 24 23.500 17M24 3V9H18" /></Ico></Reload>
      </Brand>
      <SearchBox>
        <Ico w={28} vb="0 0 28 28" sw={4} c="#a6a6a8"><circle cx="12" cy="11.500" r="9" /><path d="M19 19L26 26" /></Ico>
        <SearchInput placeholder="아이콘 검색" aria-label="아이콘 검색" />
      </SearchBox>
      <Filters>
        <Pick><PlainSelect aria-label="종류"><option>전체 선택</option></PlainSelect><CaretSvg /></Pick>
        <Pick><PlainSelect aria-label="크기"><option>48px</option></PlainSelect><CaretSvg /></Pick>
        <Wheel aria-label="색상" />
      </Filters>
      <Shelf>
        <Tiles>
          {TILES.map(([c, sw, art], i) => (
            <Tile key={i} $c={c} aria-label={"아이콘 " + (i + 1)}><Ico w={40} vb="0 0 40 40" sw={sw}>{art}</Ico></Tile>
          ))}
        </Tiles>
        <Thumb />
      </Shelf>
    </Panel>
  );
}

/* ---------- workspace ---------- */

const Workspace = styled.section`display: flex; flex-direction: column; flex: 1; min-width: 0; border-left: 1px solid #e4e4e6;`;
const RulerRow = styled.div`display: flex; height: 36px; flex: none;`;
const Corner = styled.span`width: 36px; flex: none; border-bottom: 1px solid #e2e2e6;`;
const Across = styled.div`
  display: flex; flex: 1; min-width: 0; overflow: hidden; padding-left: 14px;
  border-bottom: 1px solid #e2e2e6; border-right: 1px solid #e2e2e6;
`;
const Gutter = styled.div`width: 24px; flex: none;`;
const markText = css`font-size: 18px; color: #7d7d80; position: relative; flex: none;`;
const MarkX = styled.span`
  ${markText} width: ${STEP}; padding: 4px 0 0 2px; border-left: 1px solid #e2e2e6; line-height: 24px;
  &::after { content: ""; position: absolute; left: 50%; bottom: 0; width: 1px; height: 15px; background: #e2e2e6; }
`;
const Down = styled.div`
  display: flex; flex-direction: column; width: 37px; flex: none; overflow: hidden; border-right: 1px solid #e2e2e6;
  & > :first-child { margin-top: -24px; }
`;
const MarkY = styled.span`
  ${markText} height: ${STEP}; border-top: 1px solid #e2e2e6; padding: 2px 0 0 3px; line-height: 24px;
  &::after { content: ""; position: absolute; top: 50%; right: 0; height: 1px; width: 15px; background: #e2e2e6; }
`;
const Upright = styled.span`display: block; width: 24px; writing-mode: vertical-rl; transform: rotate(180deg); text-align: right;`;
const Middle = styled.div`display: flex; flex: 1; min-height: 0;`;
const Stage = styled.div`position: relative; flex: 1; min-width: 0; overflow: hidden; border-bottom: 1px solid #e2e2e6;`;
const ScrollY = styled.div`width: 24px; flex: none; padding: 267px 1px 0 2px; border-left: 1px solid #e2e2e6;`;
const ThumbY = styled.span`display: block; height: 575px; border-radius: 10px; background: #d1d2d4;`;
const ScrollX = styled.div`height: 25px; flex: none; padding: 2px 0 0 217px; border-bottom: 1px solid #e6e6ea;`;
const ThumbX = styled.span`display: block; width: 583px; height: 20px; border-radius: 10px; background: #d1d2d4;`;
const Palette = styled.div`display: flex; align-items: center; gap: 2px; height: 32px; flex: none; background: #fbfbfd;`;
const FillButton = styled.button`display: flex; align-items: center; gap: 2px; width: 67px; flex: none; padding-left: 23px; color: ${INK};`;
const Chip = styled.button`flex: 1 1 0; height: 30px; border-radius: 2px; background: ${(p) => p.$c};`;

/* diagram parts, placed on the free canvas */
const at = css`position: absolute; left: ${(p) => p.$x}px; top: ${(p) => p.$y}px;`;
const Disc = styled.div`
  ${at} display: grid; place-items: center; width: 142px; height: 142px; border-radius: 50%;
  background: ${(p) => p.$c}; border: 2px solid ${(p) => p.$edge || p.$c};
`;
const Stem = styled.div`${at} width: 5px; height: ${(p) => p.$h}px; background: ${(p) => p.$c};`;
const ArrowBox = styled.div`
  ${at} width: 420px; height: 103px;
  svg { position: absolute; inset: 0; }
`;
const ArrowText = styled.span`
  position: relative; display: block; text-align: center; color: #fff; font-size: 35px; font-weight: 700; line-height: 107px;
`;
const Note = styled.p`
  ${at} width: 420px; margin: 0; text-align: center; white-space: pre-line;
  font-size: 35px; font-weight: 350; line-height: 42px; color: #111;
`;
const Dash = styled.div`
  position: absolute; left: 0; right: 0; top: ${(p) => p.$y}px; height: 1px;
  background: repeating-linear-gradient(90deg, #0f78d8 0 5px, transparent 5px 8px);
`;
const Handle = styled.div`${at} width: 17px; height: 17px; border: 1px solid #0f7fe6; background: #fff;`;
const RedFrame = styled.div`${at} width: 270px; height: 132px; border: 8px solid #fe0000;`;

const Arrow = ({ x, y, c, edge, children }) => (
  <ArrowBox $x={x} $y={y}>
    <svg width="420" height="103" viewBox="0 0 420 103" aria-hidden="true">
      <path d="M1.500 1H388L418.500 51.500L388 102H1.500L31.500 51.500Z" fill={c} stroke={edge || c} strokeWidth="2" />
    </svg>
    <ArrowText>{children}</ArrowText>
  </ArrowBox>
);

const Float = styled.div`
  ${at} display: flex; width: 947px; height: 159px; padding: 16px 0; background: #fff;
  border: 1px solid #ededed; border-radius: 8px; box-shadow: 0 6px 14px rgba(0, 0, 0, 0.09);
`;
const FloatGroup = styled.div`
  display: flex; height: 128px; padding: 0 ${(p) => p.$pr || 0}px 0 ${(p) => p.$pl || 0}px;
  border-right: ${(p) => (p.$last ? "0" : "1px solid #ececec")};
`;
const FloatItem = styled.button`
  display: flex; flex-direction: column; align-items: center; gap: 11px; width: ${(p) => p.$w}px; padding-top: 4px;
  font-size: 24px; font-weight: 350; line-height: 32px; color: #1e1e1e; white-space: nowrap;
`;
const FloatIcon = styled.span`display: grid; place-items: center; height: 56px; color: ${INK};`;
const CountItem = styled.label`
  display: flex; flex-direction: column; align-items: center; gap: 15px; width: ${(p) => p.$w}px; padding-top: 8px;
  font-size: 24px; font-weight: 350; line-height: 32px;
`;
const Count = styled.span`
  display: flex; align-items: center; width: 96px; height: 48px; padding: 0 9px 0 14px; border: 1px solid #ebebeb; border-radius: 6px;
`;
const CountInput = styled.input`flex: 1; min-width: 0; height: 40px; outline: 0; font-weight: 400;`;
const Spin = styled.span`display: flex; flex-direction: column; gap: 14px;`;
const Side = styled.div`display: flex; flex-direction: column; align-items: center; justify-content: space-between; margin: -4px 11px -6px auto; color: ${INK};`;

const Assist = styled.div`
  position: absolute; right: 33px; bottom: 32px; display: flex; align-items: center; justify-content: center; gap: 20px; width: 176px; height: 80px;
  border-radius: 40px; background: #fff; box-shadow: 0 5px 16px rgba(0, 0, 0, 0.14);
`;
const AssistRule = styled.span`width: 1px; height: 48px; background: #e4e4e8;`;

function FloatBar() {
  return (
    <Float $x={54} $y={21}>
      <FloatGroup><FloatItem $w={96}><FloatIcon><TIcon w={38} /></FloatIcon>텍스트</FloatItem></FloatGroup>
      <FloatGroup><FloatItem $w={129}><FloatIcon><BrushIcon /></FloatIcon>서식 복사</FloatItem></FloatGroup>
      <FloatGroup><FloatItem $w={101}><FloatIcon><Ico w={38} h={36} vb="0 0 38 36" sw={3.2}><rect x="2" y="25" width="6" height="9" rx="1.500" /><rect x="16" y="13" width="6" height="21" rx="1.500" /><rect x="30" y="2" width="6" height="32" rx="1.500" /></Ico></FloatIcon>유형</FloatItem></FloatGroup>
      <FloatGroup $pr={15}>
        <CountItem $w={129}>
          <Count><CountInput defaultValue="5" aria-label="번호" /><Spin><Bare aria-label="증가"><CaretSvg up /></Bare><Bare aria-label="감소"><CaretSvg /></Bare></Spin></Count>
          번호
        </CountItem>
        <FloatItem $w={62}><FloatIcon><Ico w={36} vb="0 0 38 38" sw={3.6}><circle cx="19" cy="19" r="16.800" /><path d="M13 12.500H25M19 19H27M12 19H13M13 25.500H25" strokeWidth="3.800" /></Ico></FloatIcon>정렬</FloatItem>
      </FloatGroup>
      <FloatGroup $pl={8} $pr={11}>
        <FloatItem $w={80}><FloatIcon><Ico w={36} vb="0 0 36 36" sw={3.8}><path d="M4 4H32M4 32H32" /><rect x="4" y="13" width="28" height="9" rx="2" strokeWidth="3.600" /></Ico></FloatIcon>간격</FloatItem>
        <FloatItem $w={80}><FloatIcon><Ico w={38} vb="0 0 38 38" sw={3.6}><rect x="3" y="18" width="11.500" height="14.500" rx="1.500" /><rect x="23" y="4" width="11.500" height="14.500" rx="1.500" /><path d="M23 28H35M31 23L35 28L31 33" /></Ico></FloatIcon>오프셋</FloatItem>
      </FloatGroup>
      <FloatGroup><FloatItem $w={97}><FloatIcon><Ico w={38} vb="0 0 38 38" sw={3.6}><rect x="2.500" y="3" width="33" height="12" rx="2" /><rect x="2.500" y="22" width="33" height="12" rx="2" /><path d="M11 9H11.500M11 28H11.500" strokeWidth="4.500" /></Ico></FloatIcon>데이터</FloatItem></FloatGroup>
      <FloatGroup $last><FloatItem $w={96}><FloatIcon><Ico w={42} vb="0 0 42 42" sw={3.4}><circle cx="21" cy="21" r="18.500" /><path d="M21 12V12.200M21 21V21.200M21 30V30.200" strokeWidth="5.500" /></Ico></FloatIcon>기타</FloatItem></FloatGroup>
      <Side>
        <Bare aria-label="고정"><Ico w={24} vb="0 0 24 24" sw={1.5}><Fill d="M14 2L22 9L20 11L19 11L15 16Q16 19 14 22L9 17L3 22L2 21L7 15L3 10Q6 8 9 9L13 5L12 4Z" /></Ico></Bare>
        <Ico w={4} h={30} vb="0 0 4 30" sw={4} c="#cbcbcf"><path d="M2 3V3.100M2 15V15.100M2 27V27.100" /></Ico>
        <Bare aria-label="축소"><Ico w={22} vb="0 0 22 22" sw={2} c="#8e8e92"><path d="M2 8.500H8.500V2M13.500 21V13.500H21" strokeLinejoin="miter" /></Ico></Bare>
      </Side>
    </Float>
  );
}

const RED = "#e64748", YELLOW = "#ffbf2b", SKY = "#00aeef", GREEN = "#8bcf59", PURPLE = "#7030a0";

function Diagram() {
  return (
    <>
      <Disc $x={-66} $y={202} $c={RED}>
        <Ico w={102} h={80} vb="0 0 102 80" sw={6.5} c="#fff"><rect x="4" y="13" width="93" height="61" rx="9" /><path d="M43 12Q43 4 50 4Q57 4 57 12M20 66Q20 47 38 47Q56 47 56 66M67 30H80M76 42H80" /><circle cx="38" cy="36" r="12" /></Ico>
      </Disc>
      <Stem $x={2} $y={343} $h={160} $c={RED} />
      <Disc $x={824} $y={202} $c={SKY}>
        <Ico w={90} h={88} vb="0 -8 90 88" sw={4} c="#fff"><path d="M11 5H79Q87 5 87 13V54Q87 62 79 62H35L17 75V62H11Q3 62 3 54V13Q3 5 11 5Z" /><circle cx="27" cy="34" r="5.500" strokeWidth="5" /><circle cx="45" cy="34" r="5.500" strokeWidth="5" /><circle cx="63" cy="34" r="5.500" strokeWidth="5" /></Ico>
      </Disc>
      <Stem $x={892} $y={343} $h={160} $c={SKY} />
      <Disc $x={1716} $y={202} $c={PURPLE} $edge={SKY} />

      <Arrow x={-186} y={502} c={RED}>January</Arrow>
      <Arrow x={259} y={499} c={YELLOW}>February</Arrow>
      <Arrow x={705} y={502} c={SKY}>March</Arrow>
      <Arrow x={1151} y={499} c={GREEN} edge={YELLOW}>April</Arrow>
      <Arrow x={1596} y={502} c={PURPLE} edge={SKY} />

      <Disc $x={379} $y={760} $c={YELLOW}>
        <svg width="98" height="74" viewBox="0 0 98 74" fill="none" stroke="#fff" strokeWidth="7" aria-hidden="true"><rect x="38.500" y="4" width="18" height="17" /><path d="M48 21V53M12 50V36H85V50" /><rect x="3.500" y="52.500" width="18" height="17" /><rect x="38.500" y="52.500" width="18" height="17" /><rect x="74.500" y="52.500" width="18" height="17" /></svg>
      </Disc>
      <Stem $x={447} $y={601} $h={162} $c={YELLOW} />
      <Disc $x={1271} $y={760} $c={GREEN} $edge={YELLOW}>
        <svg width="72" height="92" viewBox="0 0 72 92" fill="none" stroke="#fff" strokeWidth="6" aria-hidden="true"><path d="M11 73H4V4H55V10" /><rect x="15" y="14" width="51" height="68" /><path d="M27 28H53M27 40H53M27 52H53M27 64H53" /></svg>
      </Disc>
      <Stem $x={1338} $y={598} $h={166} $c={YELLOW} />

      <Note $x={257} $y={336}>{"각 부서별 인터뷰 진행\n및 실행 상황 최적화"}</Note>
      <Note $x={1150} $y={336}>{"각 부서별 내부 실행 계획\n리스트 작성 및 보고"}</Note>
      <Note $x={705} $y={688}>{"주요 방향성과 추진\n체계, 방법 명확히 하기"}</Note>
      <Note $x={-186} $y={645}>{"2021년 상황을\n분석하여 기존\n직원들의 직책과 보유\n인사 재검토"}</Note>
      <Note $x={1483} $y={688}>{"프로그램\n위한 지"}</Note>

      <Dash $y={203} />
      <Dash $y={901} />
      <Handle $x={906} $y={195} />
      <Handle $x={906} $y={893} />
    </>
  );
}

const CHIPS = `ab0e1f cb0c31 ea4360 f7647f f99bab 297f8e 37a8c1 41c1dd 62dcf1 a6f1ff f45227 ff8038 fd971b ffb715 fdc65c
14967f 17b59c 1bcfb4 68dbc9 86eedb 9b2a5c c84e8a e468a7 f985c5 f0c1dc 5e8a12 74a127 98bf26 b3d24b d1e28e
2026ad 353fd9 6a45f2 916ef9 ab92f7 fac903 f9df2d f0ec2c faf84e fcff80 9b4fdd c24fe3 d46bfb be83ff dba2ff
2e7d43 3da259 52b077 63bd88 90d7ab e8372c fb4a3e f96364 ff7a7c ff918b 243ea3 2e56cf 3168f1 648bff 88aef6
752c02 943501 a53f25 ce5d3f e27556 1a8ddb 2c9df6 41b0ff 3dd0fd 66e4ff 774c34 935b41 b36f4d d4825b f6986c
8b7f76 b2ab9a cfcab8 e5dece f3eddb 191919 2f2f2f 444444 5a5a5a 7c7c7c b9b9b9 cacaca d9d9d9 e6e6e6 f2f2f2 ffffff`.split(/\s+/);
const XMARKS = Array.from({ length: 23 }, (_, i) => 40 + i * 10);
const YMARKS = Array.from({ length: 15 }, (_, i) => 40 + i * 10);

function Work() {
  return (
    <Workspace>
      <RulerRow>
        <Corner />
        <Across>{XMARKS.map((m) => <MarkX key={m}>{m}</MarkX>)}</Across>
        <Gutter />
      </RulerRow>
      <Middle>
        <Down><MarkY />{YMARKS.map((m) => <MarkY key={m}><Upright>{m}</Upright></MarkY>)}</Down>
        <Stage>
          <Diagram />
          <FloatBar />
          <RedFrame $x={508} $y={29} />
          <Assist>
            <Bare aria-label="AI 그리기">
              <Ico w={40} vb="0 0 40 40" sw={3} c="url(#ai)">
                <defs><linearGradient id="ai" gradientUnits="userSpaceOnUse" x1="0" y1="0" x2="40" y2="0"><stop offset="0" stopColor="#8a45f5" /><stop offset="0.550" stopColor="#5a4dff" /><stop offset="1" stopColor="#2b7bff" /></linearGradient></defs>
                <path d="M6 13Q3 9 7 7Q11 4 14 8L31 30Q33 34 30 36Q27 38 24 35ZM9 17L16 12" />
                <path fill="url(#ai)" stroke="none" d="M21 1L22.500 4.500L26 6L22.500 7.500L21 11L19.500 7.500L16 6L19.500 4.500ZM32 8L34 13L39 15L34 17L32 22L30 17L25 15L30 13ZM6 22L7.500 25.500L11 27L7.500 28.500L6 32L4.500 28.500L1 27L4.500 25.500Z" />
              </Ico>
            </Bare>
            <AssistRule />
            <Bare aria-label="AI 도우미"><svg width="40" height="40" viewBox="0 0 40 40" aria-hidden="true"><path fill="url(#ai)" d="M17 6Q21 19 34 22.500Q21 26 17 39Q13 26 0 22.500Q13 19 17 6Z" /><path fill="#3375ff" d="M31 1Q33 7.500 38.500 9.500Q33 11.500 31 18Q29 11.500 23.500 9.500Q29 7.500 31 1Z" /></svg></Bare>
          </Assist>
        </Stage>
        <ScrollY><ThumbY /></ScrollY>
      </Middle>
      <ScrollX><ThumbX /></ScrollX>
      <Palette>
        <FillButton aria-label="채우기 색"><BucketIcon /><CaretSvg /></FillButton>
        {CHIPS.map((c) => <Chip key={c} $c={"#" + c} aria-label={"#" + c} />)}
      </Palette>
    </Workspace>
  );
}

/* ---------- status bar ---------- */

const StatusBar = styled.footer`
  display: flex; align-items: center; height: 61px; flex: none; background: #f2f3f9; color: #1e1e1e; overflow: hidden;
  line-height: 36px; white-space: nowrap;
`;
const StatusRule = styled.span`width: 1px; height: 43px; flex: none; background: #dadbe1;`;
const StatusButton = styled.button`
  display: flex; align-items: center; justify-content: center; gap: ${(p) => p.$gap || 12}px; flex: none; height: 56px;
  width: ${(p) => (p.$w ? p.$w + "px" : "auto")}; padding-right: ${(p) => p.$pr || 0}px;
`;
const PageSelect = styled.label`display: flex; align-items: center; width: 256px; padding: 0 17px 0 32px;`;
const PageTab = styled.button`width: 144px; height: 56px; padding-top: 4px; color: ${BLUE}; font-weight: 700;`;
const StatusText = styled.span`padding: 4px 17px 0;`;
const StatusTools = styled.div`display: flex; align-items: center; gap: 27px; padding: 0 23px;`;
const Spring = styled.span`flex: 1;`;

function Status() {
  return (
    <StatusBar>
      <StatusButton $w={75} $pr={7} aria-label="페이지 보기"><Ico w={36} h={22} vb="0 0 36 22" sw={2.4}><path d="M2 1V21M34 1V21" /><rect x="8" y="2" width="20" height="18" rx="1" /></Ico></StatusButton>
      <StatusRule />
      <PageSelect><PlainSelect aria-label="페이지" $pt={4}><option>Page-1</option></PlainSelect><CaretSvg /></PageSelect>
      <StatusRule />
      <StatusButton $w={80} aria-label="페이지 추가"><Ico w={24} vb="0 0 24 24" sw={2.2}><path d="M12 1V23M1 12H23" /></Ico></StatusButton>
      <StatusRule />
      <PageTab>Page-1</PageTab>
      <StatusRule />
      <Spring />
      <StatusRule />
      <StatusText>형태 수: 35</StatusText>
      <StatusRule />
      <StatusText>모양 ID: 102</StatusText>
      <StatusRule />
      <StatusTools>
        <StatusButton aria-label="레이어"><Ico w={36} h={32} vb="0 0 36 32" sw={2.400}><path d="M18 2L34 11.500L18 21L2 11.500ZM2 18.500L18 29.500L34 18.500" /></Ico><CaretSvg c="#8a8a8e" /></StatusButton>
        <StatusButton $gap={20} aria-label="집중"><Ico w={28} h={30} vb="6 0 28 30" sw={2.600}><path d="M13 2H7.500V9M27 2H32.500V9M13 28H7.500V21M27 28H32.500V21" strokeLinecap="butt" /><path d="M16 8H21L25 12V22H16Z" /></Ico>집중</StatusButton>
        <StatusButton aria-label="재생"><Ico w={34} vb="0 0 34 34" sw={2.400}><circle cx="17" cy="17" r="15" /><path d="M14 11V23L23 17Z" /></Ico></StatusButton>
      </StatusTools>
      <StatusRule />
      <StatusButton $w={41} aria-label="축소"><Ico w={24} vb="0 0 24 24" sw={2.600}><path d="M4 12H40" /></Ico></StatusButton>
    </StatusBar>
  );
}

export default function App() {
  return (
    <>
      <Global />
      <Page>
        <Top />
        <Ribbon />
        <Main><LeftRail /><IconPanel /><Work /></Main>
        <Status />
      </Page>
    </>
  );
}
